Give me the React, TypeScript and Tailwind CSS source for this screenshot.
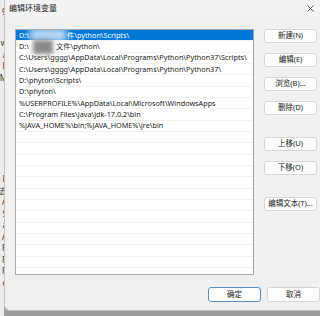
import React from "react";

const rows: React.ReactNode[] = [
  <>D:\<span className="inline-block w-[38px]" />件\python\Scripts\</>,
  <>D:\<span className="inline-block w-[27px]" />文件\python\</>,
  <>C:\Users\gggg\AppData\Local\Programs\Python\Python37\Scripts\</>,
  <>C:\Users\gggg\AppData\Local\Programs\Python\Python37\</>,
  <>D:\phyton\Scripts\</>,
  <>D:\phyton\</>,
  <>%USERPROFILE%\AppData\Local\Microsoft\WindowsApps</>,
  <>C:\Program Files\Java\jdk-17.0.2\bin</>,
  <>%JAVA_HOME%\bin;%JAVA_HOME%\jre\bin</>,
];

const font = { fontFamily: '"Noto Sans", "Noto Sans CJK SC", sans-serif' };

function Btn({ label, className = "", primary = false }: { label: string; className?: string; primary?: boolean }) {
  return (
    <div
      className={`h-[14px] w-[53px] flex items-center justify-center rounded-[3px] bg-[#fdfdfd] border text-[7.5px] leading-none text-[#1b1b1b] ${
        primary ? "border-[#5b8ec7]" : "border-[#d6d6d6]"
      } ${className}`}
    >
      {label}
    </div>
  );
}

export default function App() {
  const empty = Array.from({ length: 14 });
  return (
    <div className="w-[320px] h-[316px] flex overflow-hidden bg-[#9e9e9e]" style={font}>
      {/* window behind */}
      <div className="w-[4px] h-full bg-[#ececec] overflow-hidden relative">
        <div className="absolute right-[-3px] top-[4px] flex flex-col items-end text-[8px] leading-[11.5px] text-[#333]">
          <span>g</span>
          <span className="mt-[10px]">t</span>
          <span>w</span>
          <span>a</span>
          <span>E</span>
          <span>M</span>
          <span className="mt-[90px]">E</span>
          <span>去</span>
          <span>A</span>
          <span>S</span>
          <span>a</span>
          <span>A</span>
          <span>R</span>
          <span>R</span>
          <span>R</span>
          <span>e</span>
        </div>
      </div>
      {/* dialog */}
      <div className="w-[316px] h-[311px] shrink-0 bg-[#f0f0f0] rounded-bl-[6px] border-l border-b border-[#c4c4c4] flex flex-col">
        <div className="h-[16px] shrink-0 flex items-center justify-between pl-[4px] pr-[3px] bg-[#f3f3f3]">
          <span className="text-[8px] leading-none text-[#1b1b1b]" style={{ fontFamily: '"Noto Sans CJK SC", sans-serif' }}>
            编辑环境变量
          </span>
          <svg width="7" height="7" viewBox="0 0 7 7" className="mr-[3px]">
            <path d="M0.5 0.5 L6.5 6.5 M6.5 0.5 L0.5 6.5" stroke="#333" strokeWidth="0.8" />
          </svg>
        </div>
        <div className="flex pl-[10px] pt-[13px]">
          {/* list */}
          <div className="relative w-[239px] h-[246px] bg-white border border-[#a9a9a9] overflow-hidden">
            {rows.map((r, i) => (
              <div
                key={i}
                className={`h-[11.33px] flex items-center pl-[3px] text-[7.25px] leading-none whitespace-nowrap border-b border-[#f2f2f2] ${
                  i === 0 ? "bg-[#0078d7] text-white" : "text-[#1b1b1b]"
                }`}
              >
                {r}
              </div>
            ))}
            {empty.map((_, i) => (
              <div key={"e" + i} className="h-[11.33px] border-b border-[#f0f0f0]" />
            ))}
            <div className="absolute left-[12px] top-[-2px] w-[40px] h-[14px] rounded-full bg-white/70 blur-[3px]" />
            <div className="absolute left-[17px] top-[10px] w-[20px] h-[14px] bg-[#8a8a8a] blur-[2px]" />
          </div>
          {/* buttons */}
          <div className="ml-[10px] flex flex-col">
            <Btn label="新建(N)" />
            <Btn label="编辑(E)" className="mt-[10px]" />
            <Btn label="浏览(B)..." className="mt-[10px]" />
            <Btn label="删除(D)" className="mt-[10px]" />
            <Btn label="上移(U)" className="mt-[22px]" />
            <Btn label="下移(O)" className="mt-[10px]" />
            <Btn label="编辑文本(T)..." className="mt-[22px]" />
          </div>
        </div>
        <div className="flex justify-end gap-[6px] mt-[12px] pr-[0px]">
          <Btn label="确定" primary className="h-[15px] w-[52px]" />
          <Btn label="取消" className="h-[15px] w-[53px]" />
        </div>
      </div>
    </div>
  );
}
